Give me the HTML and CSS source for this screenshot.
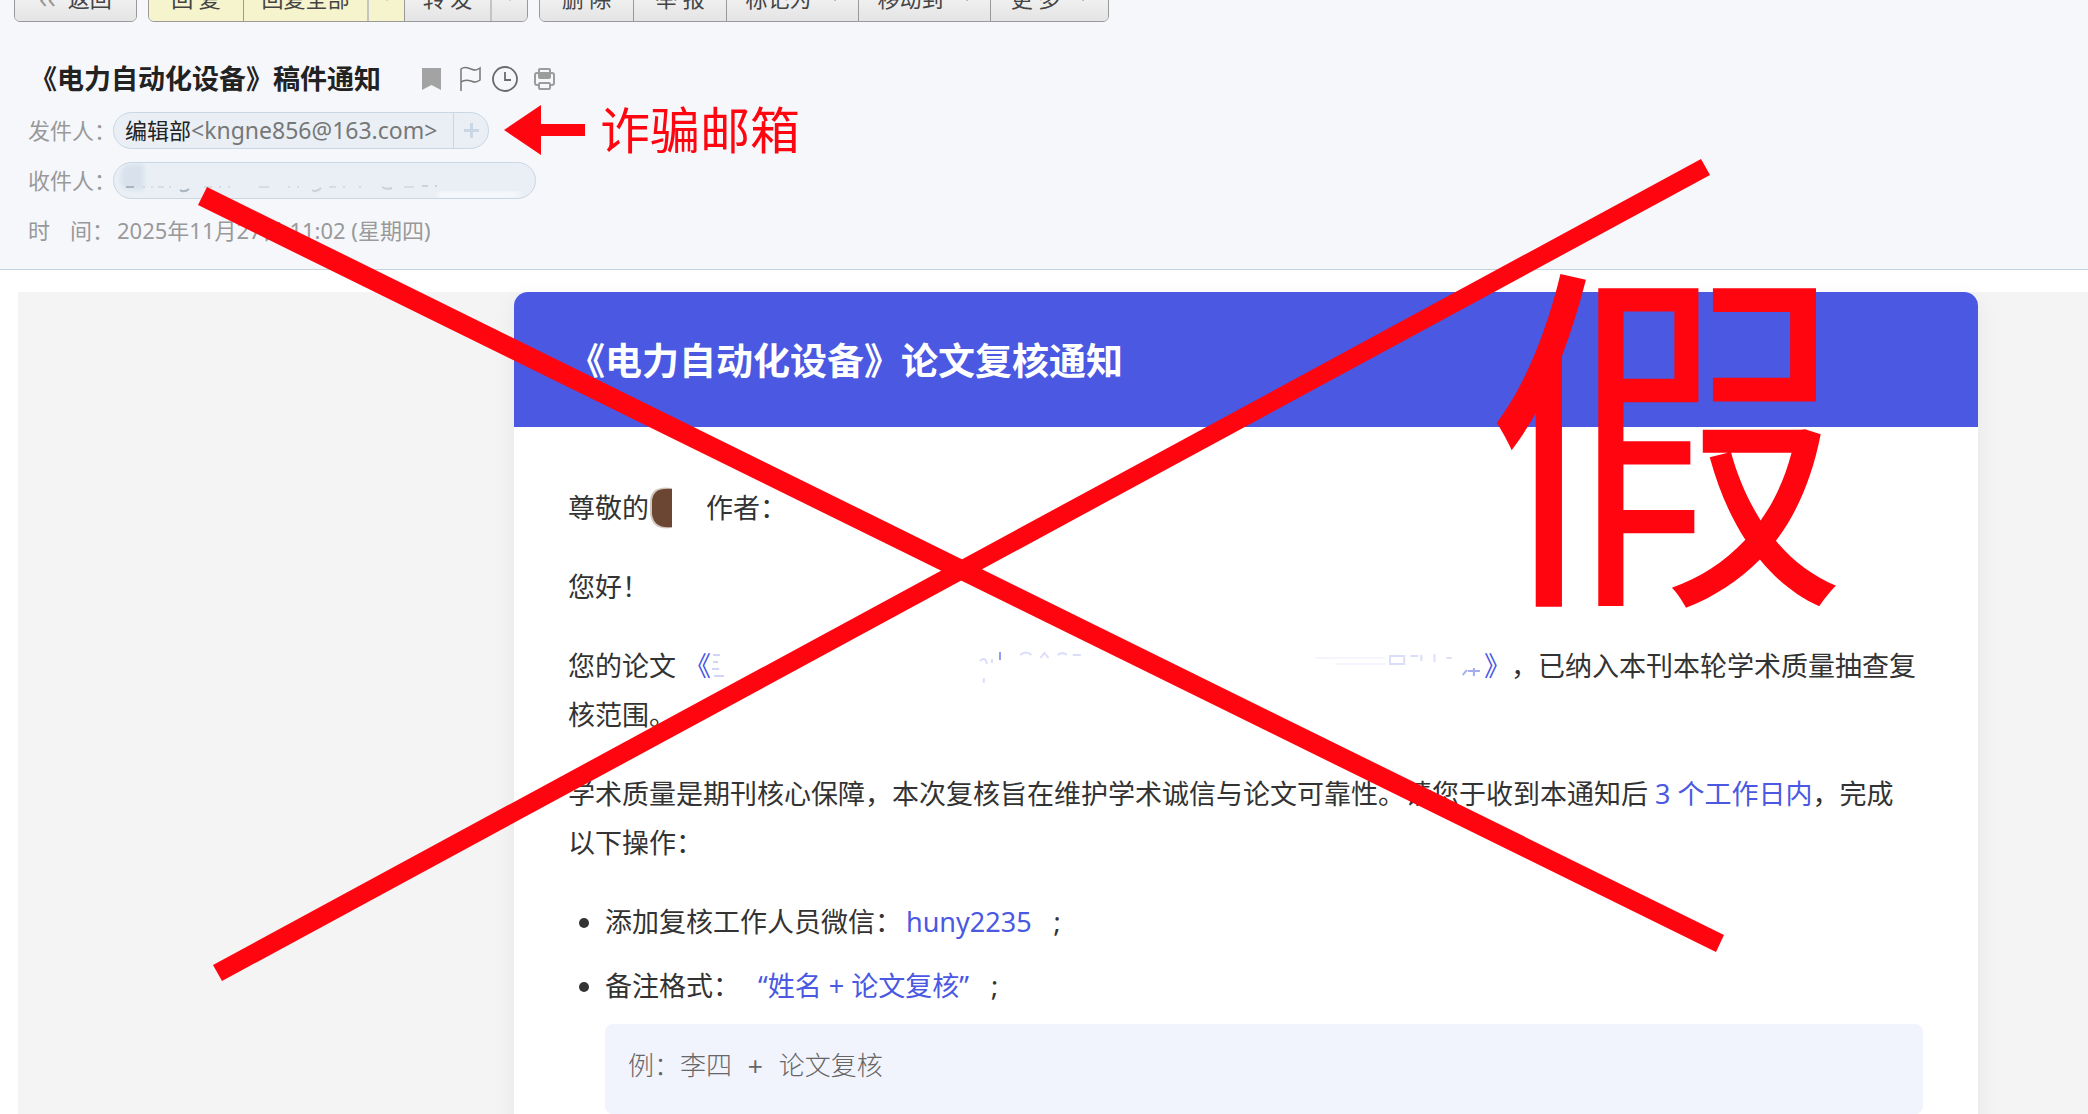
FILE: index.html
```html
<!DOCTYPE html>
<html lang="zh-CN">
<head>
<meta charset="utf-8">
<title>《电力自动化设备》稿件通知</title>
<link rel="stylesheet" href="styles.css">
</head>
<body>
<header class="mail-head">
  <nav class="toolbar" aria-label="邮件操作">
    <div class="group"><button class="btn back"><span class="chev">‹‹</span>返回</button></div>
    <div class="group">
      <button class="btn reply w-reply">回 复</button>
      <button class="btn reply w-all">回复全部</button>
      <button class="btn reply drop w-drop" aria-label="更多回复方式"><i class="caret"></i></button>
      <button class="btn w-fwd">转 发</button>
      <button class="btn drop w-drop" aria-label="更多转发方式"><i class="caret"></i></button>
    </div>
    <div class="group">
      <button class="btn w-plain">删 除</button>
      <button class="btn w-plain">举 报</button>
      <button class="btn w-menu">标记为<i class="caret"></i></button>
      <button class="btn w-menu">移动到<i class="caret"></i></button>
      <button class="btn w-more">更 多<i class="caret"></i></button>
    </div>
  </nav>

  <div class="subject-row">
    <h1 class="subject">《电力自动化设备》稿件通知</h1>
    <div class="marks">
      <svg width="20" height="24" viewBox="0 0 20 24"><path d="M0 1h19v22l-9.500-5L0 23z" fill="#a3a3a3"/></svg>
      <svg width="24" height="26" viewBox="0 0 24 26"><path d="M3 25V3c4-3 7-1 10 0s5 2 9-1v12c-4 3-6 2-9 1s-6-2-10 1" fill="none" stroke="#777" stroke-width="1.500"/></svg>
      <svg width="26" height="28" viewBox="0 0 26 28"><circle cx="13" cy="14" r="12" fill="none" stroke="#6b6b6b" stroke-width="1.800"/><path d="M13 7v8h6" fill="none" stroke="#6b6b6b" stroke-width="1.800"/></svg>
      <svg width="22" height="24" viewBox="0 0 22 24"><g fill="none" stroke="#9c9c9c" stroke-width="2"><path d="M5 6V2.500Q5 2 6 2h9q1 0 1 1v3M5 18H3q-2 0-2-2V8q0-2 2-2h2M16 6h2q2 0 2 2v8q0 2-2 2h-2"/><rect x="5" y="16" width="11" height="6" rx="1"/></g><path d="M4 5h13v5q0 2-2 2H6q-2 0-2-2z" fill="#9c9c9c"/></svg>
    </div>
  </div>

  <dl class="meta">
    <div class="meta-row">
      <dt>发件人：</dt>
      <dd class="chip sender"><span class="chip-text"><b>编辑部</b><span class="address">&lt;kngne856@163.com&gt;</span></span><button class="add" aria-label="添加联系人"></button></dd>
      <dd class="warning">
        <svg width="82" height="50" viewBox="0 0 82 50"><path d="M0 25L37 0v19h44v12H37v19z" fill="#ff0510"/></svg>
        <span>诈骗邮箱</span>
      </dd>
    </div>
    <div class="meta-row">
      <dt>收件人：</dt>
      <dd class="chip masked">
        <svg width="423" height="38" viewBox="0 0 423 38"><defs><filter id="soft"><feGaussianBlur stdDeviation="2"/></filter></defs><path d="M8 8q3-5 9-5h13v26H17Q8 29 6 20z" fill="#d9e2ec" filter="url(#soft)"/><path d="M324 31h84q-6 6-12 6h-72z" fill="#f8fafd" filter="url(#soft)"/><g fill="none" stroke="#aab4be" stroke-width="2"><path d="M12 26h8M66 29q4 3 9-1"/><path d="M198 29q4 3 9-2M268 26q5 3 10 1M308 25h6M322 24v2" opacity=".5"/><path d="M30 25v2M38 25v2M44 26h6M56 25v2M90 26h8M106 25v2M115 25v2M145 26h10M175 25v2M184 25v2M215 26h7M230 25v2M246 25v2M290 26h10" opacity=".3"/></g></svg>
      </dd>
    </div>
    <div class="meta-row">
      <dt class="spread"><span>时</span><span>间：</span></dt>
      <dd class="date">2025年11月27日 11:02 (星期四)</dd>
    </div>
  </dl>
</header>

<main class="mail-body">
  <article class="card">
    <h2 class="card-title">《电力自动化设备》论文复核通知</h2>
    <div class="card-content">
      <p class="greeting">尊敬的<svg class="blot" width="24" height="44" viewBox="0 0 24 44"><path d="M23 2Q1-1 1 16v12q2 17 22 14z" fill="#6b4733" fill-opacity=".3"/><path d="M23 3Q3 1 3 16v12q2 15 20 13z" fill="#6b4733"/></svg>作者：</p>
      <p>您好！</p>
      <p class="paper"><span>您的论文</span><span class="accent title-open">《</span>
        <svg class="erased" height="40" viewBox="0 0 765 40" preserveAspectRatio="none"><g fill="none" stroke="#4a58e2" stroke-width="2"><path d="M2 9h7M2 16h5M1 23h7M3 30h10" opacity=".25"/><path d="M286 14v-8" opacity=".6"/><path d="M266 15q6-5 7 3M270 32v5M278 17v-4M306 9q6-5 11 0M326 12l4-5 4 5M343 9q5-4 9 0M358 9h8" opacity=".2"/><path d="M598 12h70M618 18h50" opacity=".06"/><path d="M672 10h14v8h-14zM692 10h8M703 9v6M716 8v8M728 12h5" opacity=".2"/><path d="M744 29l4-5M749 25h12M755 22v8" opacity=".5"/></g></svg>
        <span class="paper-end"><span class="accent">》</span>，已纳入本刊本轮学术质量抽查复</span></p>
      <p>核范围。</p>
      <p>学术质量是期刊核心保障，本次复核旨在维护学术诚信与论文可靠性。请您于收到本通知后 <span class="accent">3 个工作日内</span>，完成<br>以下操作：</p>
      <ul class="steps">
        <li>添加复核工作人员微信：<span class="accent wechat">huny2235</span><span class="stop">;</span></li>
        <li>备注格式：<span class="accent quoted">“姓名 + 论文复核”</span><span class="stop">;</span>
          <div class="example">例：李四 + 论文复核</div>
        </li>
      </ul>
    </div>
  </article>
</main>

<svg class="cross" width="2088" height="1114" viewBox="0 0 2088 1114" aria-hidden="true"><path d="M207 187L1724 935L1716 952L198 205z" fill="#ff0510"/><path d="M213 965L222 981L1710 175L1701 159z" fill="#ff0510"/></svg>
<strong class="fake">假</strong>
</body>
</html>
```
FILE: styles.css
```css
* { box-sizing: border-box; }

body {
  margin: 0;
  position: relative;
  height: 100vh;
  overflow: hidden;
  display: flex;
  flex-direction: column;
  background: #fff;
  color: #333;
  font-family: "Noto Sans", "Noto Sans CJK SC", sans-serif;
}

h1, h2, p, ul, dl, dd { margin: 0; padding: 0; }

.mail-head {
  flex: none;
  height: 270px;
  overflow: hidden;
  background: #f6f7fb;
  border-bottom: 1px solid #c5d3de;
}

/* toolbar, scrolled partly out of view */
.toolbar {
  display: flex;
  gap: 11px;
  margin-top: -26px;
  padding-left: 14px;
}
.group {
  display: flex;
  border: 1px solid #999;
  border-radius: 6px;
  overflow: hidden;
}
.btn {
  display: flex;
  align-items: center;
  justify-content: center;
  height: 46px;
  padding: 0;
  border: 0;
  border-left: 1px solid #999;
  background: linear-gradient(#fdfdfd, #e4e4e4);
  color: #444;
  font: 22px/30px "Noto Sans", "Noto Sans CJK SC", sans-serif;
}
.btn:first-child { border-left: 0; }
.back { width: 121px; gap: 12px; }
.chev { color: #999; font-size: 27px; }
.reply { background: #f6f4cd; }
.w-reply { width: 94px; }
.w-all { width: 124px; }
.w-drop { width: 37px; }
.w-fwd { width: 86px; }
.w-plain { width: 93px; }
.w-menu { width: 132px; gap: 18px; }
.w-more { width: 118px; gap: 18px; }
.drop { border-left: 2px solid #c4c4c4; }
.caret {
  border: 5px solid transparent;
  border-top: 6px solid #777;
  border-bottom: 0;
}
.drop .caret { border-top-color: #aaa; }

.subject-row {
  display: flex;
  align-items: center;
  height: 40px;
  margin-top: 37px;
  padding-left: 30px;
}
.subject {
  font-size: 27px;
  line-height: 40px;
  color: #222;
}
.marks {
  display: flex;
  align-items: center;
  gap: 16px;
  margin-left: 41px;
}
.marks svg:nth-child(3) { margin-left: -6px; }

.meta {
  padding: 6px 0 0 28px;
  color: #999;
  font-size: 22px;
  line-height: 30px;
}
.meta-row {
  display: flex;
  align-items: center;
  height: 50px;
}
dt { width: 85px; white-space: nowrap; }
.spread { display: flex; gap: 20px; width: 89px; }
.chip {
  display: flex;
  align-items: center;
  justify-content: space-between;
  height: 37px;
  border: 1px solid #c8d7e3;
  border-radius: 19px;
  background: #e9eff5;
  overflow: hidden;
  color: #777;
}
.sender { min-width: 376px; }
.chip-text { padding: 0 12px 0 11px; white-space: nowrap; }
.chip b { font-weight: 400; color: #222; }
.address { font-size: 23px; }
.add {
  width: 35px;
  height: 37px;
  padding: 0;
  border: 0;
  border-left: 1px solid #c8d7e3;
  background:
    linear-gradient(#c8d7e3, #c8d7e3) center / 15px 3px no-repeat,
    linear-gradient(#c8d7e3, #c8d7e3) center / 3px 15px no-repeat;
}
.masked { width: 423px; }
.masked svg { flex: none; }
.warning {
  display: flex;
  align-items: center;
  gap: 14px;
  margin-left: 15px;
  color: #ff0510;
  font-size: 50px;
  line-height: 50px;
}

.mail-body {
  flex: 1;
  margin: 22px 0 0 18px;
  padding: 0 110px 0 496px;
  background: #f4f4f4;
}
.card {
  min-height: 100%;
  border-radius: 14px 14px 0 0;
  background: #fff;
  box-shadow: 0 6px 24px rgba(0, 0, 0, .06);
}
.card-title {
  padding: 41px 54px 39px;
  border-radius: 14px 14px 0 0;
  background: #4a58e2;
  color: #fff;
  font-size: 37px;
  line-height: 55px;
}
.card-content {
  padding: 56px 55px 0 54px;
  font-size: 27px;
  line-height: 49px;
}
.card-content p { margin-bottom: 30px; white-space: nowrap; }
.accent { color: #4a58e2; }
.greeting { display: flex; align-items: center; }
.blot { margin-right: 33px; }
.card-content .paper {
  display: flex;
  align-items: center;
  margin-bottom: 0;
  padding-right: 7px;
}
.title-open { margin-left: 8px; }
.erased { flex: 1; min-width: 0; }
.paper-end { text-spacing-trim: space-all; }
.steps { padding-left: 37px; }
.steps li { margin-bottom: 15px; }
.wechat { margin-left: 4px; }
.stop { margin-left: 22px; }
.quoted { margin-left: 18px; }
.example {
  height: 90px;
  margin-top: 14px;
  padding: 24px 23px;
  border-radius: 8px;
  background: #f1f4fd;
  color: #666;
  font: 300 26px/40px "Liberation Mono", "Noto Sans CJK SC", monospace;
}

/* marks drawn over the message */
.cross { position: absolute; left: 0; top: 0; }
.fake {
  position: absolute;
  left: 1484px;
  top: 238px;
  color: #ff0510;
  font: 400 364px/364px "Noto Sans CJK SC", sans-serif;
}
```
